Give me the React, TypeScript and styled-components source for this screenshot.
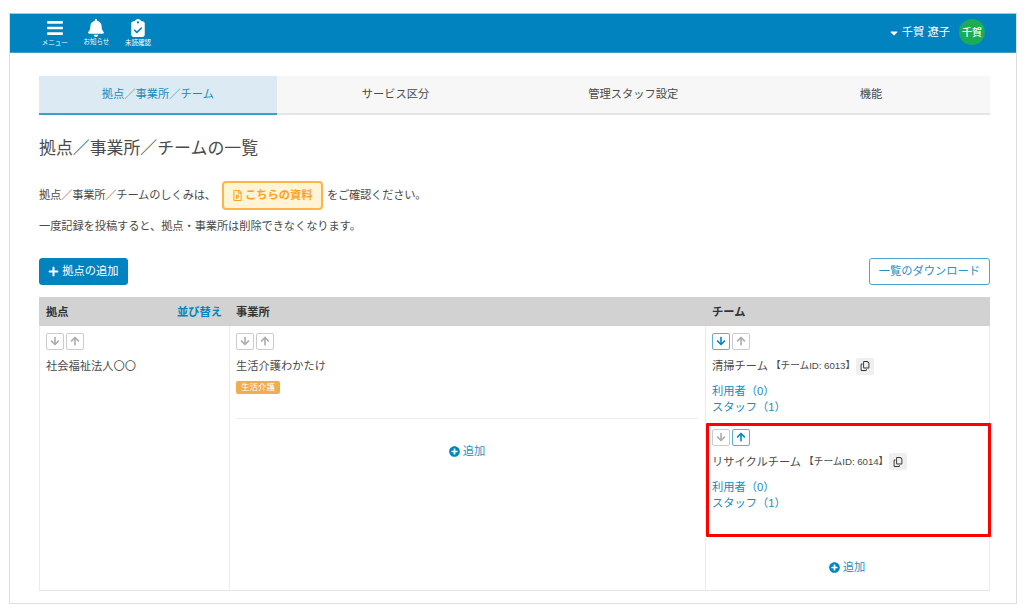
import React from "react";
import styled, { createGlobalStyle, css } from "styled-components";
import { FaBars, FaBell, FaPlus, FaArrowDown, FaArrowUp, FaCaretDown, FaRegFilePowerpoint, FaPlusCircle } from "react-icons/fa";
import { FaClipboardCheck, FaRegCopy } from "react-icons/fa6";

const blue = "#0083be";

const GlobalStyle = createGlobalStyle`
  * { box-sizing: border-box; }
  body {
    margin: 0;
    background: #fff;
    color: #4a4a4a;
    font-family: "Liberation Sans", "Noto Sans CJK JP", sans-serif;
    font-size: 11.25px;
    line-height: 16px;
  }
  h1, p { margin: 0; font-weight: 400; }
  svg { display: block; flex: none; }
`;

const Frame = styled.div`
  width: 1008px;
  height: 591px;
  margin: 13px 0 0 9px;
  border: 1px solid #dedede;
  border-top-color: #9ccbe0;
`;

const Header = styled.header`
  display: flex;
  align-items: flex-start;
  height: 39px;
  padding: 5px 31px 0 24px;
  background: ${blue};
  border-bottom: 1px solid #3fa0cc;
  color: #fff;
`;

const HeaderItem = styled.div<{ $gap?: number }>`
  display: flex;
  flex-direction: column;
  align-items: center;
  width: 41.6px;
  font-size: 6.5px;
  line-height: 8px;
  white-space: nowrap;
  svg { height: 18px; margin-bottom: ${(p) => p.$gap ?? 2}px; }
`;

const User = styled.div`
  display: flex;
  align-items: center;
  gap: 2px;
  margin: 0 9px 0 auto;
  height: 27px;
  line-height: 27px;
`;

const Avatar = styled.div`
  width: 26px;
  height: 26px;
  border-radius: 50%;
  background: #1dac56;
  font-size: 10px;
  font-weight: 500;
  line-height: 27px;
  text-align: center;
`;

const Content = styled.main`
  padding: 23px 26px 0 29px;
`;

const Tabs = styled.nav`
  display: grid;
  grid-template-columns: repeat(4, 1fr);
  height: 39px;
`;

const Tab = styled.div<{ $active?: boolean }>`
  background: ${(p) => (p.$active ? "#dcebf3" : "#f7f7f7")};
  border-bottom: 2px solid ${(p) => (p.$active ? "#3a9fcb" : "#e5e5e5")};
  color: ${(p) => (p.$active ? "#188abe" : "#4a4a4a")};
  line-height: 37px;
  text-align: center;
`;

const Title = styled.h1`
  margin-top: 21px;
  font-size: 16.9px;
  line-height: 26px;
`;

const Guide = styled.p`
  display: flex;
  align-items: center;
  height: 30px;
  margin-top: 18px;
  letter-spacing: -0.2px;
`;

const DocLink = styled.a`
  display: flex;
  align-items: center;
  gap: 2px;
  width: 101px;
  height: 29px;
  margin: 0 4px 0 6px;
  padding: 0 0 0 8px;
  border: 2px solid #ffb545;
  border-radius: 4px;
  background: #fff4d6;
  color: #ffa11f;
  font-weight: 700;
  letter-spacing: 0;
  white-space: nowrap;
`;

const Note = styled.p`
  margin-top: 8px;
  letter-spacing: -0.1px;
`;

const Actions = styled.div`
  display: flex;
  justify-content: space-between;
  margin-top: 24px;
`;

const Button = styled.button<{ $primary?: boolean }>`
  display: flex;
  align-items: center;
  justify-content: center;
  gap: 3px;
  width: ${(p) => (p.$primary ? 89 : 121)}px;
  height: 27px;
  padding: 0 0 1px;
  border: 1px solid ${(p) => (p.$primary ? blue : "#4ba6cf")};
  border-radius: 3px;
  background: ${(p) => (p.$primary ? blue : "#fff")};
  color: ${(p) => (p.$primary ? "#fff" : "#2791c3")};
  font: inherit;
`;

const Table = styled.section`
  display: grid;
  grid-template-columns: 190px 476px 285px;
  grid-template-rows: 29px 264px;
  margin-top: 12px;
  border-bottom: 1px solid #e6e6e6;
`;

const HeadCell = styled.div`
  display: flex;
  justify-content: space-between;
  padding: 0 7px;
  background: #d2d2d2;
  color: #333;
  font-weight: 700;
  line-height: 30px;
`;

const SortLink = styled.a`
  color: ${blue};
`;

const Cell = styled.div`
  padding: 0 7px 0 6px;
  border-left: 1px solid #ececec;
  &:last-child { border-right: 1px solid #ececec; }
`;

const Entry = styled.div<{ $height?: number }>`
  height: ${(p) => (p.$height ? p.$height + "px" : "auto")};
  padding-top: 7px;
`;

const Office = styled(Entry)`
  border-bottom: 1px solid #ececec;
`;

const Highlight = styled.div`
  position: relative;
  &::before {
    content: "";
    position: absolute;
    inset: 1px -9px -20px -6px;
    border: 3px solid #f00;
    border-radius: 1px;
  }
`;

const Arrows = styled.div`
  display: flex;
  gap: 2px;
`;

const ArrowButton = styled.button<{ $on?: boolean }>`
  display: grid;
  place-items: center;
  width: 18px;
  height: 17px;
  padding: 0 0 1px;
  border: 1px solid #ccc;
  border-radius: 2px;
  background: #fff;
  color: #aaa;
  font-size: 10px;
  ${(p) => p.$on && css`
    border-color: #5bb0d6;
    color: ${blue};
  `}
`;

const Name = styled.div`
  display: flex;
  align-items: center;
  height: 18px;
  margin-top: 7px;
  white-space: pre;
`;

const TeamId = styled.span`
  margin: 0 1px 0 3px;
  font-size: 9.7px;
  letter-spacing: -0.05px;
`;

const CopyButton = styled.button`
  display: grid;
  place-items: center;
  width: 18px;
  height: 17px;
  padding: 0;
  border: 0;
  border-radius: 2px;
  background: #efefef;
  color: #333;
  font-size: 10px;
`;

const Links = styled.div`
  display: flex;
  flex-direction: column;
  margin-top: 8px;
  color: #188abe;
`;

const Badge = styled.span`
  display: block;
  width: 44px;
  height: 13px;
  margin-top: 6px;
  border-radius: 2px;
  background: #f0ad4e;
  color: #fff;
  font-size: 8.5px;
  line-height: 12px;
  text-align: center;
`;

const Add = styled.a<{ $top: number }>`
  display: flex;
  align-items: center;
  justify-content: center;
  gap: 3px;
  margin-top: ${(p) => p.$top}px;
  color: #2791c3;
  svg { color: ${blue}; }
`;

function Sorter({ down, up }: { down?: boolean; up?: boolean }) {
  return (
    <Arrows>
      <ArrowButton $on={down} aria-label="下へ"><FaArrowDown /></ArrowButton>
      <ArrowButton $on={up} aria-label="上へ"><FaArrowUp /></ArrowButton>
    </Arrows>
  );
}

function Team({ name, id, down, up }: { name: string; id: number; down?: boolean; up?: boolean }) {
  return (
    <Entry $height={95.5}>
      <Sorter down={down} up={up} />
      <Name>
        {name}
        <TeamId>【チームID: {id}】</TeamId>
        <CopyButton aria-label="コピー"><FaRegCopy /></CopyButton>
      </Name>
      <Links>
        <a>利用者（0）</a>
        <a>スタッフ（1）</a>
      </Links>
    </Entry>
  );
}

export default function App() {
  return (
    <>
      <GlobalStyle />
      <Frame>
        <Header>
          <HeaderItem><FaBars size={18} />メニュー</HeaderItem>
          <HeaderItem $gap={1}><FaBell size={16} />お知らせ</HeaderItem>
          <HeaderItem $gap={2}><FaClipboardCheck size={18} />未読確認</HeaderItem>
          <User><FaCaretDown size={12} />千賀 遼子</User>
          <Avatar>千賀</Avatar>
        </Header>
        <Content>
          <Tabs>
            <Tab $active>拠点／事業所／チーム</Tab>
            <Tab>サービス区分</Tab>
            <Tab>管理スタッフ設定</Tab>
            <Tab>機能</Tab>
          </Tabs>
          <Title>拠点／事業所／チームの一覧</Title>
          <Guide>
            拠点／事業所／チームのしくみは、
            <DocLink><FaRegFilePowerpoint size={11} />こちらの資料</DocLink>
            をご確認ください。
          </Guide>
          <Note>一度記録を投稿すると、拠点・事業所は削除できなくなります。</Note>
          <Actions>
            <Button $primary><FaPlus size={11} />拠点の追加</Button>
            <Button>一覧のダウンロード</Button>
          </Actions>
          <Table>
            <HeadCell>拠点<SortLink>並び替え</SortLink></HeadCell>
            <HeadCell>事業所</HeadCell>
            <HeadCell>チーム</HeadCell>
            <Cell>
              <Entry>
                <Sorter />
                <Name>社会福祉法人〇〇</Name>
              </Entry>
            </Cell>
            <Cell>
              <Office $height={93}>
                <Sorter />
                <Name>生活介護わかたけ</Name>
                <Badge>生活介護</Badge>
              </Office>
              <Add $top={24}><FaPlusCircle size={11} />追加</Add>
            </Cell>
            <Cell>
              <Team name="清掃チーム" id={6013} down />
              <Highlight>
                <Team name="リサイクルチーム" id={6014} up />
              </Highlight>
              <Add $top={42}><FaPlusCircle size={11} />追加</Add>
            </Cell>
          </Table>
        </Content>
      </Frame>
    </>
  );
}
